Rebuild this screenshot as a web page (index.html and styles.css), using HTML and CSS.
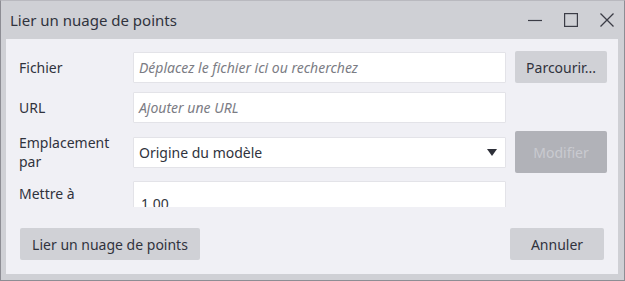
FILE: index.html
```html
<!DOCTYPE html>
<html lang="fr">
<head>
  <meta charset="UTF-8" />
  <title>Lier un nuage de points</title>
  <link rel="stylesheet" href="styles.css">
</head>
<body>
  <div class="window">
    <!-- barre de titre -->
    <div class="titlebar">
      <span class="title">Lier un nuage de points</span>
      <div class="controls">
        <svg width="14" height="14" viewBox="0 0 14 14"><path d="M0 7.5h14" stroke="#3b3c46" stroke-width="1.2" fill="none"/></svg>
        <svg width="14" height="14" viewBox="0 0 14 14"><rect x="0.6" y="0.6" width="12.8" height="12.8" stroke="#3b3c46" stroke-width="1.2" fill="none"/></svg>
        <svg width="14" height="14" viewBox="0 0 14 14"><path d="M0.5 0.5l13 13M13.5 0.5l-13 13" stroke="#3b3c46" stroke-width="1.3" fill="none"/></svg>
      </div>
    </div>

    <div class="frame">
      <div class="content">
        <div class="form">
          <div class="row">
            <label class="label">Fichier</label>
            <div class="field placeholder">Déplacez le fichier ici ou recherchez</div>
            <button class="btn side">Parcourir...</button>
          </div>
          <div class="row">
            <label class="label">URL</label>
            <div class="field placeholder">Ajouter une URL</div>
          </div>
          <div class="row tall">
            <label class="label">Emplacement par</label>
            <div class="field select">
              <span>Origine du modèle</span>
              <svg width="10" height="7" viewBox="0 0 10 7"><path d="M0 0h10L5 7z" fill="#2e3039"/></svg>
            </div>
            <button class="btn side disabled">Modifier</button>
          </div>
          <div class="row tall top">
            <label class="label">Mettre à l'échelle</label>
            <div class="field big">1.00</div>
          </div>
        </div>

        <div class="footer">
          <button class="btn">Lier un nuage de points</button>
          <button class="btn cancel">Annuler</button>
        </div>
      </div>
    </div>
  </div>
</body>
</html>
```

FILE: styles.css
```css
html, body {
  margin: 0;
  padding: 0;
}
body {
  font-family: "Noto Sans", "Open Sans", sans-serif;
  font-size: 14px;
  color: #30333d;
  background: #fff;
}
.window {
  width: 625px;
  height: 281px;
  box-sizing: border-box;
  border: 1px solid #8d8d94;
  border-top-color: #b9b9bf;
  background: #cfd0d5;
  display: flex;
  flex-direction: column;
}
.titlebar {
  height: 38px;
  flex: none;
  display: flex;
  align-items: center;
  justify-content: space-between;
  padding: 0 10px 0 9px;
}
.title {
  font-size: 15px;
  color: #30333d;
}
.controls {
  display: flex;
  align-items: center;
  gap: 22px;
  margin-top: -1px;
}
.controls svg {
  display: block;
}
/* cadre gris autour du contenu */
.frame {
  flex: 1;
  padding: 0 6px 6px 5px;
  display: flex;
}
.content {
  flex: 1;
  background: #f0f0f5;
  display: flex;
  flex-direction: column;
}
.form {
  height: 168px;
  box-sizing: border-box;
  overflow: hidden;
  padding: 12px 11px 0 13px;
  display: flex;
  flex-direction: column;
  gap: 8px;
}
.row {
  display: flex;
  align-items: center;
  min-height: 32px;
  flex: none;
}
.row.tall {
  height: 42px;
}
.label {
  width: 114px;
  flex: none;
  line-height: 19px;
  padding-right: 10px;
  box-sizing: border-box;
}
.row.top .label {
  align-self: flex-start;
  padding-top: 3px;
}
.field {
  width: 373px;
  height: 31px;
  flex: none;
  box-sizing: border-box;
  background: #fff;
  border: 1px solid #e3e3e8;
  border-radius: 1px;
  padding: 0 5px;
  display: flex;
  align-items: center;
  white-space: nowrap;
  overflow: hidden;
}
.placeholder {
  font-style: italic;
  color: #7b7c84;
}
.select {
  justify-content: space-between;
  padding-right: 8px;
}
.field.big {
  height: 42px;
  padding-left: 7px;
  padding-top: 3px;
}
.btn {
  font-family: inherit;
  font-size: 14px;
  color: #30333d;
  background: #d0d1d6;
  border: none;
  border-radius: 2px;
  height: 32px;
  padding: 0 12px;
  cursor: pointer;
}
.btn.side {
  width: 92px;
  margin-left: 9px;
  padding: 0;
}
.btn.disabled {
  height: 42px;
  background: #b1b2b8;
  color: #c9cad0;
  cursor: default;
}
.footer {
  display: flex;
  justify-content: space-between;
  padding: 21px 14px 14px;
}
.footer .btn {
  width: 180px;
  padding: 0;
}
.footer .cancel {
  width: 94px;
}
```
